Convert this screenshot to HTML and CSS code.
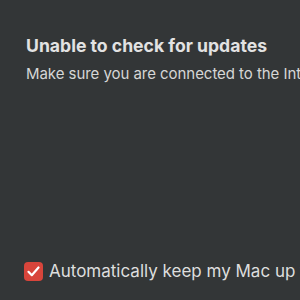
FILE: index.html
```html
<!DOCTYPE html>
<html>
<head>
<meta charset="utf-8">
<link rel="stylesheet" href="styles.css">
</head>
<body>
<div class="pane">
  <div class="message">
    <h1 class="title">Unable to check for updates</h1>
    <p class="subtitle">Make sure you are connected to the Internet, then try again.</p>
  </div>
  <label class="auto">
    <span class="check">
      <svg width="13" height="11" viewBox="0 0 13 11"><path d="M1.5 5.8 L4.8 9.2 L11.5 1.5" fill="none" stroke="#fff" stroke-width="2.2" stroke-linecap="round" stroke-linejoin="round"/></svg>
    </span>
    <span class="auto-text">Automatically keep my Mac up to date</span>
  </label>
</div>
</body>
</html>
```
FILE: styles.css
```css
html, body {
  margin: 0;
  padding: 0;
  background: #333637;
  overflow: hidden;
}
.pane {
  width: 300px;
  height: 300px;
  box-sizing: border-box;
  padding: 35px 0 0 26px;
  display: flex;
  flex-direction: column;
  font-family: Inter, "Noto Sans", sans-serif;
  white-space: nowrap;
  overflow: hidden;
}
.message {
  flex: 1;
}
.title {
  margin: 0;
  font-size: 17.6px;
  font-weight: 700;
  color: #e2e2e2;
  line-height: 21px;
}
.subtitle {
  margin: 9px 0 0;
  font-size: 15px;
  letter-spacing: -0.05px;
  color: #d6d6d6;
  line-height: 18px;
}
.auto {
  display: flex;
  align-items: center;
  gap: 6px;
  margin: 0 0 19px -2px;
  color: #dedede;
  font-size: 17px;
  letter-spacing: 0;
}
.check {
  flex-shrink: 0;
  width: 19px;
  height: 19px;
  border-radius: 4px;
  background: #d8453b;
  display: flex;
  align-items: center;
  justify-content: center;
}
```
